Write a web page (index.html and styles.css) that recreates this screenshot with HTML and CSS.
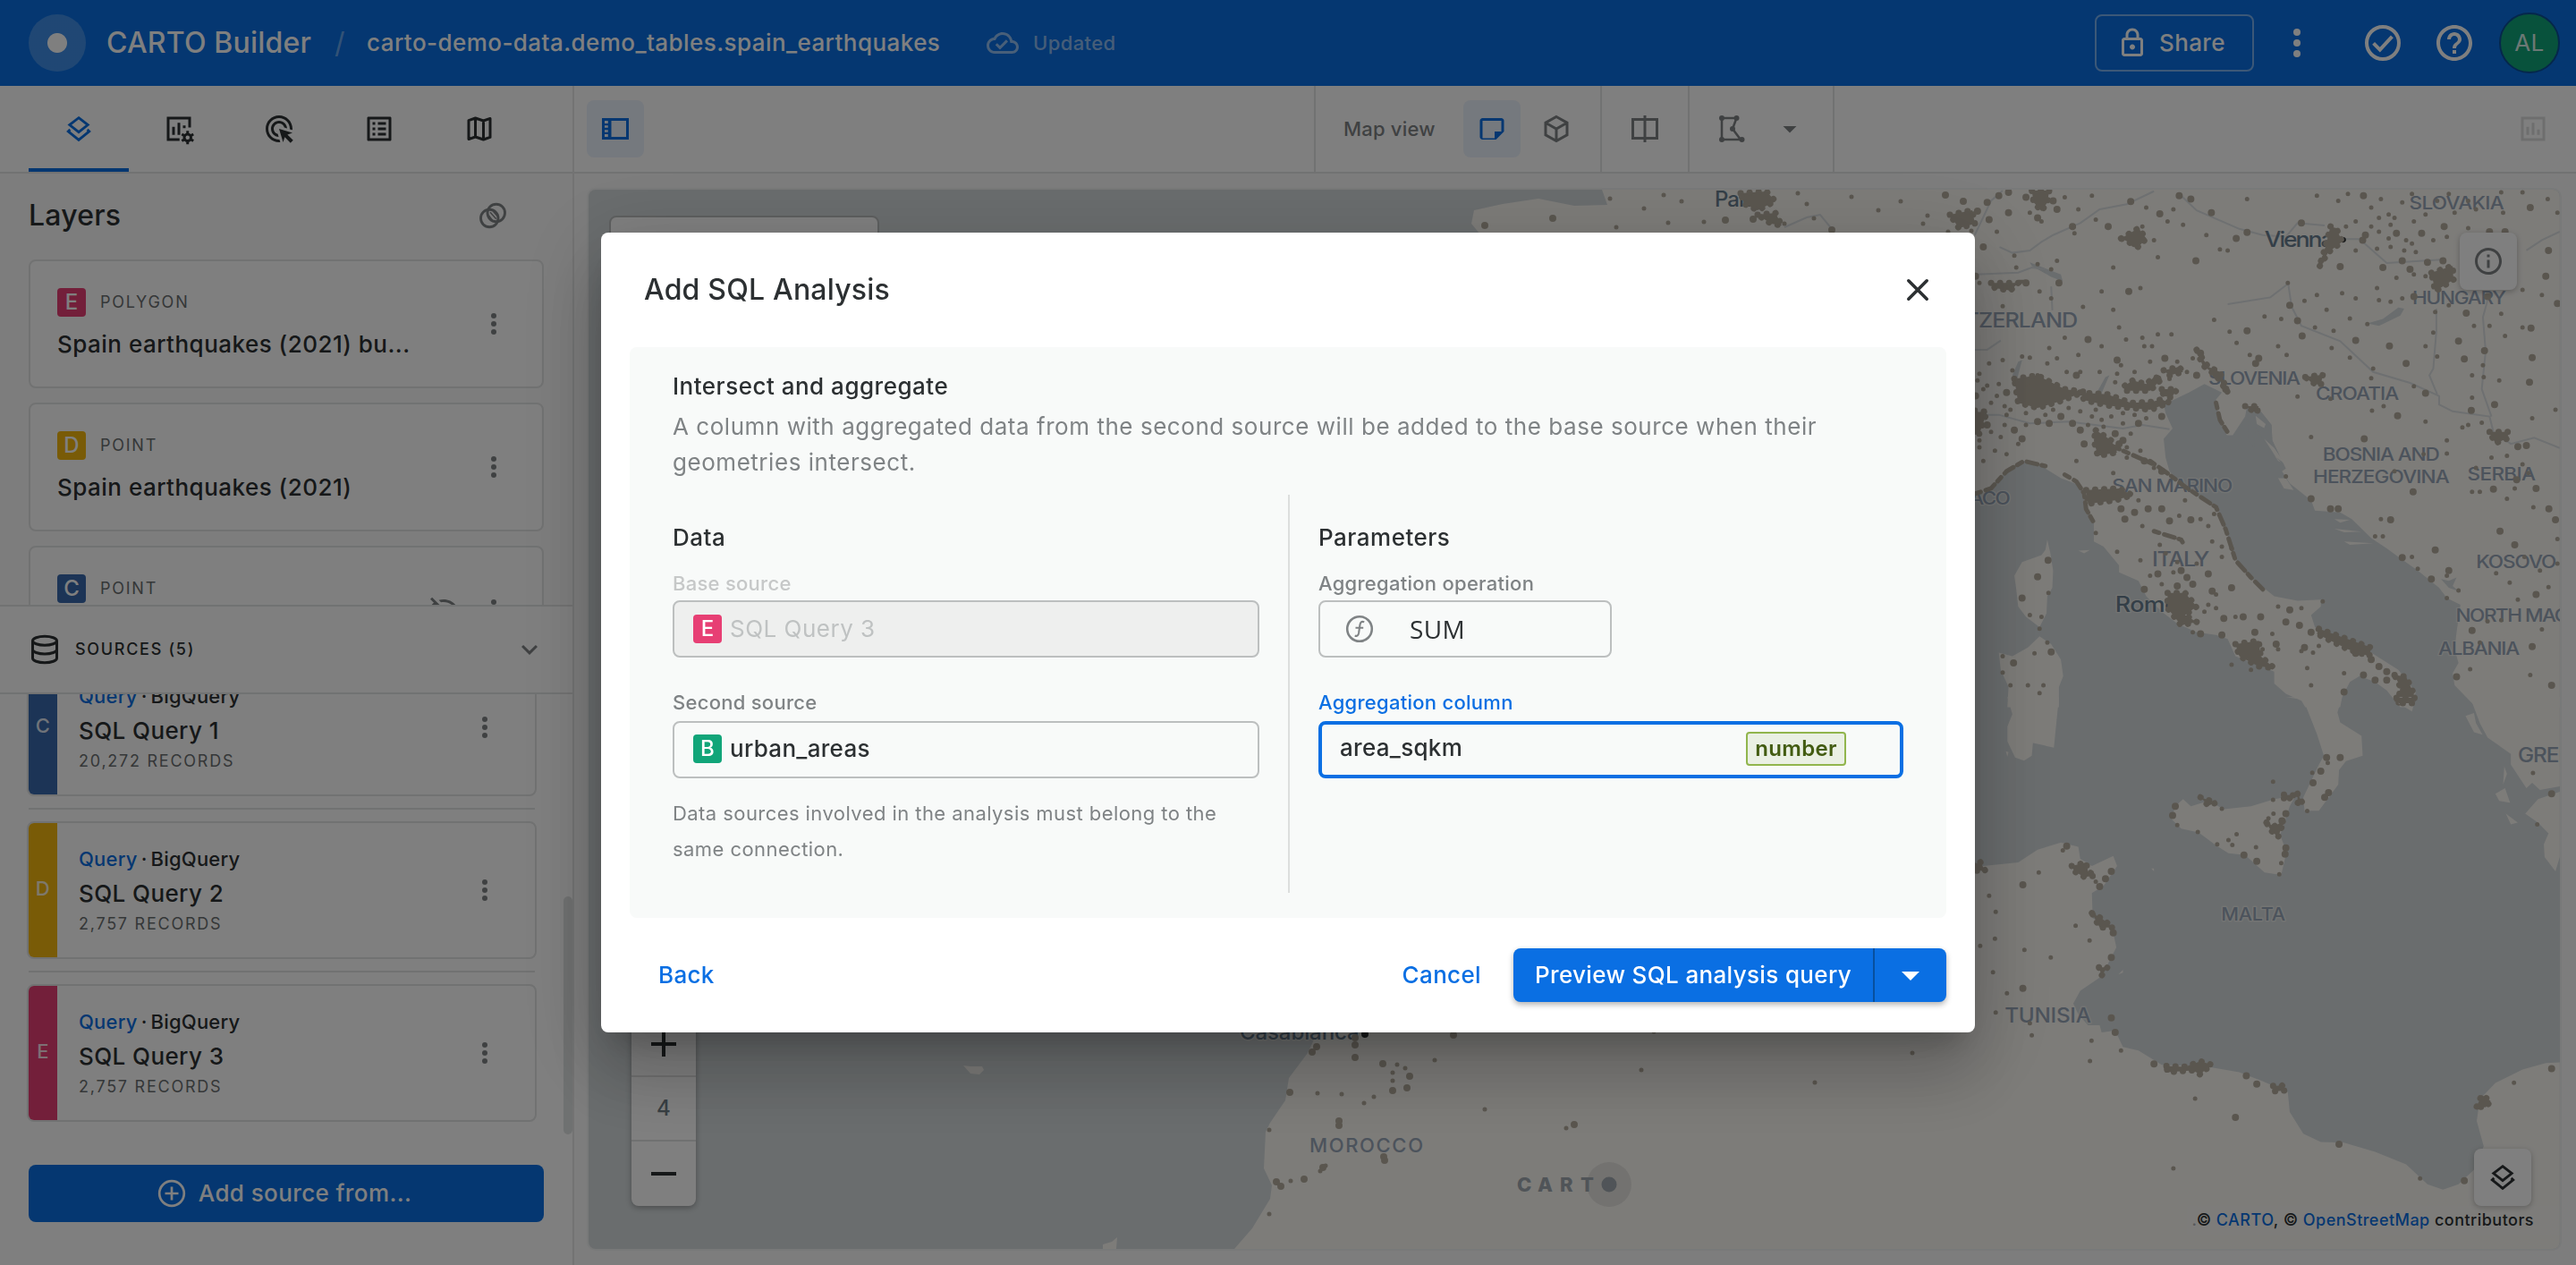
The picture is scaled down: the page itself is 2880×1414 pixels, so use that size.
FILE: index.html
```
<!DOCTYPE html>
<html lang="en">
<head>
<meta charset="utf-8">
<title>CARTO Builder</title>
<link rel="stylesheet" href="styles.css">
</head>
<body>
<svg width="0" height="0" class="defs">
  <symbol id="i-layers" viewBox="0 0 24 24"><path d="M12 3.8 18.8 9 12 14.4 5.2 9ZM5.6 12.6 4.2 13.9 12 20.2l7.8-6.3-1.4-1.3" fill="none" stroke="currentColor" stroke-width="1.9"/></symbol>
  <symbol id="i-more" viewBox="0 0 24 24"><circle cx="12" cy="6" r="2"/><circle cx="12" cy="12" r="2"/><circle cx="12" cy="18" r="2"/></symbol>
  <symbol id="i-caret" viewBox="0 0 24 24"><path d="M7 10l5 5 5-5z"/></symbol>
</svg>
<div class="app">
  <header class="topbar">
    <span class="logo"></span>
    <span class="brand">CARTO Builder</span>
    <span class="slash">/</span>
    <span class="map-name">carto-demo-data.demo_tables.spain_earthquakes</span>
    <span class="saved">
      <svg class="i36" viewBox="0 0 24 24"><path d="M19.35 10.04C18.67 6.59 15.64 4 12 4 9.11 4 6.6 5.64 5.35 8.04 2.34 8.36 0 10.91 0 14c0 3.31 2.69 6 6 6h13c2.76 0 5-2.24 5-5 0-2.64-2.05-4.78-4.65-4.96zM19 18H6c-2.21 0-4-1.79-4-4 0-2.05 1.53-3.76 3.56-3.97l1.07-.11.5-.95C8.08 7.14 9.94 6 12 6c2.62 0 4.88 1.86 5.39 4.43l.3 1.5 1.53.11c1.56.1 2.78 1.41 2.78 2.96 0 1.65-1.35 3-3 3zm-9-3.82l-2.09-2.09L6.5 13.5 10 17l6.01-6.01-1.41-1.41z"/></svg>
      Updated
    </span>
    <div class="top-actions">
      <button class="share"><svg class="i36" viewBox="0 0 24 24"><path d="M18 8h-1V6c0-2.76-2.24-5-5-5S7 3.24 7 6v2H6c-1.1 0-2 .9-2 2v10c0 1.1.9 2 2 2h12c1.1 0 2-.9 2-2V10c0-1.1-.9-2-2-2zM9 6c0-1.66 1.34-3 3-3s3 1.34 3 3v2H9V6zm9 14H6V10h12v10zm-6-3c1.1 0 2-.9 2-2s-.9-2-2-2-2 .9-2 2 .9 2 2 2z"/></svg>Share</button>
      <svg class="i48 top-more"><use href="#i-more"/></svg>
      <svg class="i48 top-check" viewBox="0 0 24 24" fill="none" stroke="currentColor" stroke-width="2"><circle cx="12" cy="12" r="9"/><path d="M6.8 12.2l3.6 3.6 6.8-7.4"/></svg>
      <svg class="i48 top-help" viewBox="0 0 24 24"><path d="M11 18h2v-2h-2v2zm1-16C6.48 2 2 6.48 2 12s4.48 10 10 10 10-4.48 10-10S17.52 2 12 2zm0 18c-4.41 0-8-3.59-8-8s3.59-8 8-8 8 3.59 8 8-3.59 8-8 8zm0-14c-2.21 0-4 1.79-4 4h2c0-1.1.9-2 2-2s2 .9 2 2c0 2-3 1.75-3 5h2c0-2.25 3-2.5 3-5 0-2.21-1.79-4-4-4z"/></svg>
      <span class="avatar">AL</span>
    </div>
  </header>

  <div class="body">
    <aside class="sidebar">
      <nav class="tabs">
        <span class="tab tab-on"><svg class="i36"><use href="#i-layers"/></svg></span>
        <span class="tab"><svg class="i36" viewBox="0 0 24 24" fill="none" stroke="currentColor" stroke-width="2"><path d="M12.5 20H4V4h16v7M8 16.5v-6M12 16.500V7.500M16 11.500v-2"/><circle cx="18.500" cy="18.500" r="2.500"/><path d="M18.500 13.500v2M18.500 21.500v2M14.200 16l1.700 1M21.100 20l1.700 1M14.200 21l1.700-1M21.100 17l1.700-1"/></svg></span>
        <span class="tab"><svg class="i36" viewBox="0 0 24 24"><path d="M11.710,17.990C8.530,17.840,6,15.220,6,12c0-3.310,2.690-6,6-6c3.220,0,5.840,2.530,5.990,5.710l-2.100-0.630C15.480,9.310,13.890,8,12,8c-2.210,0-4,1.790-4,4c0,1.890,1.310,3.480,3.080,3.890L11.710,17.990z M22,12c0,0.300-0.010,0.600-0.040,0.900l-1.970-0.590C20,12.210,20,12.100,20,12c0-4.420-3.580-8-8-8s-8,3.580-8,8s3.580,8,8,8c0.100,0,0.210,0,0.310-0.010l0.590,1.970C12.600,21.990,12.300,22,12,22C6.480,22,2,17.520,2,12C2,6.480,6.480,2,12,2S22,6.480,22,12z M18.230,16.260L22,15l-10-3l3,10l1.260-3.770l4.270,4.270l1.980-1.980L18.230,16.260z"/></svg></span>
        <span class="tab"><svg class="i36" viewBox="0 0 24 24"><path d="M19 5v14H5V5h14m1.100-2H3.900c-.5 0-.9.4-.9.9v16.200c0 .4.4.9.9.9h16.200c.4 0 .9-.5.9-.9V3.900c0-.5-.5-.9-.9-.9zM11 7h6v2h-6V7zm0 4h6v2h-6v-2zm0 4h6v2h-6zM7 7h2v2H7zm0 4h2v2H7zm0 4h2v2H7z"/></svg></span>
        <span class="tab"><svg class="i36" viewBox="0 0 24 24" fill="none" stroke="currentColor" stroke-width="2" stroke-linejoin="round"><path d="M4 5.700 9 4l6 2 5-1.700v14L15 20l-6-2-5 1.700zM9 4v14M15 6v14"/></svg></span>
      </nav>
      <section class="layers">
        <div class="layers-head"><h2>Layers</h2>
          <svg class="i36 grey" viewBox="0 0 24 24" fill="none" stroke="currentColor" stroke-width="1.900"><circle cx="14.500" cy="10" r="6.500"/><circle cx="9.500" cy="14" r="6.500"/><path d="M10 9.500l4.500 5M12 8.500l3.500 4M9 12l3 4" stroke-width="1"/></svg>
        </div>
        <div class="layer"><div class="layer-main"><div class="kind"><b class="tag c-e">E</b>POLYGON</div><div class="layer-name">Spain earthquakes (2021) bu...</div></div><svg class="i36 grey"><use href="#i-more"/></svg></div>
        <div class="layer"><div class="layer-main"><div class="kind"><b class="tag c-d">D</b>POINT</div><div class="layer-name">Spain earthquakes (2021)</div></div><svg class="i36 grey"><use href="#i-more"/></svg></div>
        <div class="layer"><div class="layer-main"><div class="kind"><b class="tag c-c">C</b>POINT</div></div>
          <svg class="i36 grey eye" viewBox="0 0 24 24"><path d="M12 6c3.790 0 7.170 2.130 8.820 5.500-.59 1.220-1.420 2.270-2.410 3.120l1.410 1.410c1.390-1.230 2.490-2.770 3.180-4.530C21.270 7.110 17 4 12 4c-1.270 0-2.490.2-3.640.57l1.650 1.650C10.660 6.090 11.320 6 12 6zM2.010 3.870l2.680 2.680C3.060 7.830 1.770 9.530 1 11.500 2.730 15.890 7 19 12 19c1.520 0 2.980-.29 4.320-.82l3.420 3.420 1.410-1.410L3.420 2.450 2.010 3.870z"/></svg>
          <svg class="i36 grey"><use href="#i-more"/></svg></div>
      </section>
      <div class="sources-head">
        <svg class="i36" viewBox="0 0 24 24" fill="none" stroke="currentColor" stroke-width="2"><ellipse cx="12" cy="5.500" rx="9" ry="3.300"/><path d="M3 5.500v13c0 1.800 4 3.300 9 3.300s9-1.500 9-3.300v-13M3 12c0 1.800 4 3.300 9 3.300s9-1.500 9-3.300"/></svg>
        <span>SOURCES (5)</span>
        <svg class="i36 grey chev" viewBox="0 0 24 24"><path d="M7.410 8.590L12 13.170l4.590-4.580L18 10l-6 6-6-6z"/></svg>
      </div>
      <div class="sources">
        <div class="src"><b class="strip c-c">C</b><div class="src-main"><p class="src-type"><i>Query</i> · <span>BigQuery</span></p><p class="src-name">SQL Query 1</p><p class="src-rec">20,272 RECORDS</p></div><svg class="i36 grey"><use href="#i-more"/></svg></div>
        <hr>
        <div class="src"><b class="strip c-d">D</b><div class="src-main"><p class="src-type"><i>Query</i> · <span>BigQuery</span></p><p class="src-name">SQL Query 2</p><p class="src-rec">2,757 RECORDS</p></div><svg class="i36 grey"><use href="#i-more"/></svg></div>
        <hr>
        <div class="src"><b class="strip c-e">E</b><div class="src-main"><p class="src-type"><i>Query</i> · <span>BigQuery</span></p><p class="src-name">SQL Query 3</p><p class="src-rec">2,757 RECORDS</p></div><svg class="i36 grey"><use href="#i-more"/></svg></div>
        <span class="scrollbar"></span>
      </div>
      <div class="add-wrap"><button class="add"><svg class="i36" viewBox="0 0 24 24" fill="none" stroke="currentColor" stroke-width="1.800"><circle cx="12" cy="12" r="9.200"/><path d="M12 7v10M7 12h10"/></svg>Add source from...</button></div>
    </aside>

    <main class="stage">
      <div class="toolbar">
        <span class="tool tool-on panel-tool"><svg class="i36" viewBox="0 0 24 24"><path d="M2 4v16h20V4H2zm4.500 14H4v-2h2.500v2zm0-3.500H4v-1.700h2.500v1.700zm0-3.300H4V9.500h2.500v1.700zm0-3.200H4V6h2.500v2zM20 18H9V6h11v12z"/></svg></span>
        <div class="group g-view"><span class="view-label">Map view</span>
          <span class="tool tool-on"><svg class="i36" viewBox="0 0 24 24"><path d="M19 6v8h-5v5H5V6h14m0-2H5c-1.100 0-2 .9-2 2v12c0 1.100.9 2 2 2h10l6-6V6c0-1.100-.9-2-2-2z"/></svg></span>
          <span class="tool"><svg class="i36" viewBox="0 0 24 24" fill="none" stroke="currentColor" stroke-width="2"><path d="M12 3l8 4.500v9L12 21l-8-4.500v-9zM4 7.500l8 4.500 8-4.500M12 12v9"/></svg></span>
        </div>
        <div class="group g-split"><svg class="i36" viewBox="0 0 24 24" fill="none" stroke="currentColor" stroke-width="2"><path d="M3 5h18v14H3zM12 2v20" /></svg></div>
        <div class="group g-draw"><svg class="i36" viewBox="0 0 24 24"><circle cx="4" cy="4" r="2"/><circle cx="15" cy="4" r="2"/><circle cx="12" cy="12" r="2"/><circle cx="4" cy="20" r="2"/><circle cx="19" cy="20" r="2"/><path d="M4 4h11l-3 8 6 8H4z" fill="none" stroke="currentColor" stroke-width="1.700"/></svg>
          <svg class="i36"><use href="#i-caret"/></svg></div>
        <svg class="i36 chart-tool" viewBox="0 0 24 24" fill="none" stroke="currentColor" stroke-width="2"><path d="M4 4h16v16H4zM8 16.500v-6M12 16.500v-9M16 16.500v-4"/></svg>
      </div>
      <div class="map">
        <svg class="canvas" viewBox="658 212 2204 1184">
          <g class="land">
            <path d="M1791 212H2208V262H1655L1645 250 1648 235 1680 228 1720 222 1760 230 1797 229Z"/>
            <path d="M1500 1130H2208V1396H1380L1400 1373 1420 1340 1422 1325 1413 1306 1415 1265 1420 1255 1437 1230 1441 1205 1462 1177 1470 1160Z"/>
            <path d="M1077 1191 1085 1192 1098 1192 1100 1196 1095 1201 1085 1200ZM1233 1396V1391L1243 1388 1249 1383 1248 1396Z"/>
          </g>
          <g transform="translate(2200 190) scale(.4337 .3827)">
            <path class="land" d="M-5 57H1526V1569H1310L1255 1505 1250 1470 1265 1440 1255 1400 1260 1350 1270 1270 1235 1250 1215 1220 1160 1170 1110 1130 1080 1105 1040 1075 990 1020 960 1000 895 995 885 965 830 915 810 880 820 872 785 790 783 745 755 705 720 690 715 720 683 775 668 775 645 720 640 670 655 650 610 625 570 650 505 685 510 710 528 755 505 785 510 840 520 880 550 915 590 950 640 980 665 1045 685 1130 730 1190 790 1245 850 1258 910 1255V1275L885 1300 895 1335 960 1370 1040 1410 1110 1460 1155 1525 1145 1569H1115L1080 1520 1050 1495 1010 1478 985 1495 965 1540 960 1569H870L860 1550 820 1530 790 1500V1465L745 1445 690 1420 670 1370 640 1358 590 1350 540 1325 500 1290 460 1245 440 1200 390 1175V1155L350 1100 325 1085V1030L300 990V950L285 920 240 900 190 865 140 848 100 880 50 940-5 950Z"/>
            <path class="land" d="M205 1080 213 1120 220 1170 218 1220 205 1245 203 1295 185 1335 150 1305 130 1275 125 1225 120 1185 140 1145 190 1125 200 1110ZM185 1362 215 1385 240 1430 246 1478 235 1510V1569H102L105 1510 85 1460 80 1410 115 1420 155 1395ZM285 1112 315 1110 300 1120ZM945 1020 985 1022 960 1030ZM945 1048 1015 1056 970 1058ZM970 1085 1045 1090 985 1095ZM800 900 815 930 840 935 820 900ZM735 725 770 745 765 755 740 745ZM760 780 790 820 840 868 800 850Z"/>
            <path class="sea" d="M720 690 755 705 783 745 785 790 815 862 790 835 762 790 742 750 738 810 724 790ZM160 270 240 305 245 325 215 312 165 280ZM1030 448 1070 435 1110 402 1125 405 1115 425 1060 455ZM355 605 365 600 340 665 330 655ZM130 560 140 555 125 620 115 600ZM1220 1195 1240 1200 1260 1190 1250 1215 1265 1230 1240 1220Z"/>
            <path class="land" d="M742 718 768 742 764 754 745 742ZM764 785 790 812 818 858 795 840Z"/>
            <path class="river" d="M82 225 115 242 160 235 190 210 220 190 290 155 340 115 410 100 480 62M550 75 590 118 700 172 760 190 820 195 850 155 920 162M970 202H1010L1080 272 1220 262M670 392 780 372 826 332 835 400 860 455 960 500 1045 590 1140 622 1215 660V685L1250 705 1345 720 1355 765 1400 800 1460 782 1526 812M1208 405V470L1200 580 1190 600 1210 655M1340 380 1328 430 1335 530 1325 640 1350 720M20 305 130 300 165 285 200 290M18 525H50L85 498M30 715H80L160 740 260 735 400 755 450 745 520 757M18 190 60 90 90 60M215 340 218 410M1526 180 1480 205 1440 235"/>
            <g class="country a">
              <text x="1138" y="115" textLength="245">SLOVAKIA</text>
              <text x="1146" y="392" textLength="242">HUNGARY</text>
              <text x="-8" y="461" textLength="292" class="lg">TZERLAND</text>
              <text x="620" y="628" textLength="238">SLOVENIA</text>
              <text x="897" y="671" textLength="215">CROATIA</text>
              <text x="915" y="849" textLength="302">BOSNIA AND</text>
              <text x="890" y="915" textLength="352">HERZEGOVINA</text>
              <text x="1288" y="907" textLength="176">SERBIA</text>
              <text x="372" y="942" textLength="311">SAN MARINO</text>
              <text x="-30" y="977" textLength="140">NACO</text>
              <text x="475" y="1157" textLength="148" class="lg">ITALY</text>
              <text x="1310" y="1163" textLength="208">KOSOVO</text>
              <text x="1258" y="1319" textLength="470">NORTH MACEDONIA</text>
              <text x="1213" y="1416" textLength="210">ALBANIA</text>
            </g>
            <g class="town-name a"><text x="765" y="225" textLength="180">Vienna</text><text x="380" y="1290" textLength="164">Rome</text></g>
            <circle cx="967" cy="204" r="8"/>
            <path class="city" d="M120 610 180 600 250 640 300 648 240 675 180 695 130 680ZM165 60 210 60 205 95 190 120 170 95ZM395 200 440 170 460 200 440 225ZM1195 300 1250 280 1252 320 1205 355ZM330 760 370 790 385 825 335 835 325 790ZM515 1235 560 1235 590 1275 560 1300 590 1320 550 1330 515 1280ZM690 1385 750 1375 755 1420 790 1455 750 1450 700 1420ZM1100 1475 1130 1480 1150 1530 1145 1560 1110 1555 1115 1510ZM305 935 390 930 425 950 380 965 310 975ZM-5 710 50 705 30 770-5 780ZM1345 765 1395 765 1390 785 1360 798ZM870 605 915 598 910 630 885 620ZM935 165 950 170 965 210 930 240 905 285 922 225ZM60 330 130 330 110 352 70 345ZM905 1340 1040 1395 1035 1420 980 1400 900 1355ZM715 690 750 690 745 710ZM590 525 620 575 650 590 670 650 640 600 605 570Z"/>
            <path class="city" d="M290 650 360 655 420 680 470 678 500 670 520 680 470 700 420 695 360 688 300 672ZM405 630 425 615 460 625 480 605 500 610 470 645 410 645ZM505 585 545 575 555 590 520 600ZM500 640 540 640 525 665 505 660Z"/>
            <path class="city-line" d="M20 945 60 930 100 880 145 850 200 865M250 890 280 910 300 945 305 990 325 1030M470 850 520 890 560 925 600 955 640 985 665 1050 690 1140 730 1190 765 1230M340 790 420 830 480 860M640 680 650 730 672 770M480 1055 550 1080 560 1100"/>
            <path class="town" d="M270 165h0M362 165h0M420 92h0M495 128h0M545 75h0M575 85h0M628 125h0M720 182h0M692 200h0M588 265h0M415 355h0M430 215h0M25 120h0M50 95h0M80 75h0M105 65h0M150 80h0M230 115h0M40 225h0M235 330h0M150 330h0M20 310h0M860 155h0M1020 75h0M1018 205h0M1025 190h0M960 282h0M1070 285h0M1120 265h0M1140 290h0M1185 270h0M1225 265h0M1105 185h0M1170 185h0M1450 110h0M1345 180h0M1385 180h0M1497 235h0M1490 310h0M1228 165h0M1520 390h0M830 395h0M850 440h0M862 485h0M1000 498h0M1087 514h0M1130 565h0M1150 370h0M1340 370h0M1285 418h0M1265 500h0M1332 528h0M1280 552h0M1452 462h0M1455 548h0M1448 620h0M1358 685h0M1298 702h0M1108 718h0M1180 652h0M720 470h0M742 565h0M750 550h0M385 555h0M600 535h0M640 598h0M665 640h0M508 550h0M310 495h0M1440 805h0M1418 808h0M1415 905h0M1465 930h0M1355 932h0M1515 1022h0M1372 1055h0M1410 1095h0M1240 1170h0M1465 1240h0M1300 1345h0M1205 1110h0M1090 1022h0M1148 940h0M1120 1132h0M1195 1195h0M885 960h0M935 990h0M955 990h0M1498 990h0M1505 1505h0M1455 1392h0M1260 1480h0M1022 785h0M500 990h0M575 1022h0M520 1025h0M620 1180h0M630 1230h0M680 1220h0M660 1310h0M710 1305h0M755 1305h0M830 1285h0M820 1320h0M855 1330h0M885 1350h0M868 1395h0M600 1355h0M655 1358h0M795 1385h0M740 1350h0M1040 1430h0M1060 1450h0M1080 1465h0M1020 1475h0M1050 1490h0M1080 1490h0M970 1525h0M1000 1412h0M455 1225h0M550 1170h0M565 1190h0M580 1210h0M540 1215h0M490 1180h0M207 1140h0M140 1250h0M180 1188h0M118 1440h0M215 1408h0M405 1020h0M430 1000h0M465 990h0M395 990h0M455 850h0M500 880h0M400 790h0M380 770h0M290 760h0M270 740h0M240 720h0M210 740h0M180 735h0M120 760h0M50 745h0M100 650h0M20 660h0M150 620h0M280 600h0M490 610h0M590 600h0M500 720h0M440 740h0M390 800h0M300 800h0M140 785h0M105 125h0M180 140h0M55 145h0M220 90h0"/>
            <path class="village" d="M320 75h0M285 115h0M330 145h0M450 165h0M460 110h0M480 205h0M515 150h0M530 115h0M555 160h0M670 235h0M650 232h0M615 190h0M490 255h0M375 285h0M345 355h0M445 345h0M275 185h0M230 265h0M215 290h0M180 275h0M125 285h0M120 250h0M90 398h0M375 408h0M297 400h0M215 375h0M185 355h0M30 330h0M720 85h0M900 75h0M955 90h0M980 70h0M1065 85h0M1040 110h0M1120 95h0M1145 70h0M1085 130h0M1060 140h0M1100 140h0M1090 160h0M1150 150h0M1180 130h0M1210 90h0M1240 70h0M1290 90h0M1255 125h0M1375 65h0M1430 65h0M1495 85h0M1520 125h0M1310 115h0M1380 125h0M1290 170h0M1000 150h0M975 165h0M1040 165h0M1060 180h0M1085 200h0M1055 230h0M1000 235h0M1090 225h0M1125 235h0M1130 205h0M1145 215h0M1200 205h0M1235 195h0M1155 240h0M1180 310h0M1150 305h0M1105 315h0M1055 345h0M965 360h0M1000 375h0M1120 375h0M1060 380h0M1090 385h0M900 365h0M868 382h0M825 330h0M925 408h0M985 434h0M765 428h0M808 435h0M635 438h0M675 472h0M895 460h0M943 470h0M938 520h0M985 548h0M800 515h0M822 540h0M727 540h0M693 505h0M525 480h0M490 480h0M450 490h0M455 515h0M390 460h0M408 495h0M250 490h0M210 520h0M285 540h0M230 550h0M345 515h0M475 515h0M395 570h0M160 548h0M90 555h0M140 545h0M55 565h0M30 595h0M1030 450h0M1045 580h0M1040 608h0M1150 632h0M1042 703h0M1072 690h0M1180 735h0M850 662h0M935 668h0M885 780h0M1235 790h0M1290 745h0M1325 738h0M1275 752h0M1455 725h0M1515 700h0M1300 600h0M1210 545h0M1180 515h0M1200 475h0M1205 415h0M1240 395h0M1305 455h0M1345 455h0M1375 420h0M1385 485h0M1430 460h0M1480 365h0M1430 350h0M1330 605h0M1370 615h0M1328 570h0M1300 665h0M1350 840h0M1390 835h0M1310 870h0M1300 940h0M1235 828h0M1100 880h0M1175 830h0M1430 860h0M1445 885h0M1320 940h0M1390 960h0M1458 985h0M1410 930h0M1520 1078h0M1435 1130h0M1520 1150h0M1475 1170h0M1362 1178h0M1397 1205h0M1418 1255h0M1497 1218h0M1340 1318h0M1320 1380h0M1375 1315h0M1480 1342h0M1450 1475h0M1295 1458h0M1265 1228h0M1235 1250h0M1235 1185h0M1160 1165h0M1145 1130h0M1065 1020h0M1050 1070h0M1070 1070h0M820 895h0M450 1040h0M545 1010h0M560 965h0M600 1020h0M620 1040h0M635 1005h0M630 1085h0M655 1100h0M680 1105h0M655 1130h0M495 1095h0M510 1120h0M445 1140h0M540 1145h0M590 1150h0M385 1115h0M470 1185h0M500 1210h0M530 1175h0M640 1240h0M620 1270h0M640 1280h0M610 1290h0M690 1305h0M580 1350h0M760 1400h0M800 1400h0M860 1280h0M860 1405h0M905 1390h0M890 1410h0M875 1455h0M885 1505h0M970 1470h0M680 1445h0M730 1460h0M785 1355h0M915 1260h0M800 1275h0M208 1235h0M160 1300h0M190 1305h0M185 1340h0M205 1380h0M172 1412h0M90 1468h0M90 1420h0M110 1505h0M155 1505h0M195 1505h0M185 1528h0M330 1060h0M375 885h0M280 850h0M255 590h0M290 590h0M340 590h0M385 595h0M380 620h0M430 590h0M470 560h0M565 590h0M580 550h0M205 565h0M180 600h0M115 585h0M80 625h0M75 660h0M25 615h0M95 690h0M100 715h0M60 680h0M50 630h0M40 640h0M85 780h0M60 765h0M30 810h0M30 790h0M70 820h0M130 800h0M150 745h0M95 745h0M320 720h0M350 750h0M400 740h0M420 770h0M400 710h0M460 725h0M480 700h0M410 840h0M440 965h0M480 870h0M40 850h0M100 830h0M250 80h0M160 125h0M75 180h0M190 150h0M330 700h0M290 705h0M260 695h0M370 720h0M430 715h0M520 610h0M540 560h0M200 715h0M150 710h0M220 700h0M110 700h0M20 700h0M345 730h0M310 745h0M410 810h0M445 820h0"/>
          </g>
          <g transform="translate(2200 780) scale(.4337 .4043)">
            <path class="land" d="M102-2H235L222 138 190 130 168 125 165 160 145 174 122 165 102 120V80L115 45ZM820-2H965L953 40 960 68 1015 105 1018 160 975 175 957 200 955 240 905 312H868L865 275 885 230 905 185 918 160 900 100 865 5ZM1108-2H1155L1145 38 1110 15ZM555 280 575 300 620 285 660 308 730 300 790 280 845 270 830 300 805 380 822 425 808 490 765 483 715 435 672 430 640 408 595 372 550 362 525 335 535 300ZM1295-2H1526V245L1475 255 1455 235 1440 250 1400 185V155L1340 110 1320 70ZM1526 260 1470 280 1437 320 1470 345 1497 375 1485 405 1487 440 1515 480 1526 440ZM1283 50 1305 42 1310 70 1327 102 1305 95ZM1383 190 1390 210 1380 240ZM1360 265 1385 250 1398 290 1370 285ZM1387 320 1418 345 1400 350ZM98 148 105 150 102 163ZM473 472 480 472 480 480ZM388 765 400 752 400 760Z"/>
            <path class="land" d="M-5 475 40 465 130 455 180 420 240 400 285 412 290 445 320 465 375 437 385 465 350 520 320 540 322 610 372 635 383 690 345 770 290 810 272 845 285 875 310 905H340L345 925 380 920 400 965 440 975 500 1015 620 1020 700 1035 760 1060 825 1090 830 1145 865 1205 910 1228 970 1230 1050 1255 1130 1290 1185 1345 1225 1360 1265 1345 1305 1305 1330 1240 1312 1170 1320 1110 1360 1065 1430 1028 1490 1010 1526 1008V1524H-5Z"/>
            <g class="country b">
              <text x="1418" y="178" textLength="208" class="lg">GREECE</text>
              <text x="653" y="617" textLength="166">MALTA</text>
              <text x="95" y="899" textLength="223" class="lg">TUNISIA</text>
            </g>
            <path class="city" d="M268 465 305 455 310 480 330 492 300 495 275 480ZM512 1018 560 1020 600 1005 630 1015 610 1030 600 1042 580 1030 515 1035ZM787 1073 810 1072 822 1085 790 1088ZM1312 1130 1325 1098 1348 1115 1335 1132ZM320 595 345 610 375 635 340 635ZM770 345 790 355 815 340 800 385 780 365ZM600 275 640 290 620 298ZM815 268 845 270 815 285ZM338 745 360 745 345 768ZM1105 0 1155 0 1150 15 1110 15ZM18 465 30 450 45 478H18ZM850 265 865 295 850 290Z"/>
            <path class="town" d="M255 410h0M340 522h0M370 480h0M375 650h0M370 718h0M380 925h0M370 885h0M480 1012h0M745 1068h0M718 1045h0M957 1234h0M1280 1335h0M535 300h0M528 325h0M820 415h0M818 432h0M745 452h0M712 435h0M890 235h0M925 165h0M910 203h0M920 275h0M930 262h0M142 517h0M142 803h0M690 1160h0M1505 1025h0M1505 265h0M820 320h0M810 340h0M960 165h0M355 500h0"/>
            <path class="village" d="M183 483h0M55 547h0M72 592h0M70 666h0M32 686h0M146 697h0M214 718h0M278 630h0M314 671h0M65 759h0M101 817h0M72 870h0M160 900h0M165 933h0M319 948h0M315 1004h0M395 975h0M586 1108h0M530 1301h0M1166 1329h0M1408 1064h0M540 352h0M593 371h0M643 405h0M672 393h0M693 377h0M682 407h0M743 413h0M788 320h0M775 333h0M787 232h0M787 282h0M803 488h0M808 457h0M875 313h0M928 180h0M888 207h0M245 422h0M1457 208h0M1468 350h0M330 508h0M655 307h0"/>
          </g>
          <path class="river" d="M1995 254 2020 243 2035 240 2048 256"/>
          <g class="country c"><text x="1464" y="1288" textLength="127" class="lg">MOROCCO</text></g>
          <g class="town-name c"><text x="1386" y="1162" textLength="134">Casablanca</text><text x="1917" y="231" textLength="54">Paris</text></g>
          <path class="town" d="M1472 1170h0M1467 1176h0M1515 1160h0M1515 1182h0M1546 1189h0M1576 1203h0M1573 1216h0M1557 1219h0M1442 1221h0M1497 1253h0M1497 1258h0M1547 1293h0M1548 1297h0M1427 1321h0M1432 1326h0M1458 1318h0M1479 1305h0M1625 1157h0M1760 1257h0M1515 1168h0"/>
          <path class="village" d="M1443 1320h0M1482 1303h0M1476 1309h0M1562 1190h0M1571 1194h0M1557 1199h0M1557 1208h0M1604 1185h0M1473 1222h0M1500 1223h0M1536 1226h0M1525 1233h0M1660 1240h0M1751 1261h0M1835 1196h0M2029 1210h0M2138 1177h0M1419 1263h0M1419 1357h0M1807 254h0M1865 249h0M1849 1153h0M2204 258h0M1905 248h0M2155 241h0M2178 259h0M1800 222h0M1838 233h0M1880 225h0M1995 250h0M2020 228h0M2028 244h0M2070 220h0M2100 235h0M2125 225h0M2150 250h0M1860 218h0M2010 216h0"/>
          <path class="city" d="M1946 216 1975 214 1985 225 1965 235 1950 228ZM2180 240 2205 235 2208 250 2190 255ZM1965 240 1985 238 1992 252 1980 250Z"/>
          <path class="town" d="M1660 252h0M1736 244h0M1929 246h0M2048 257h0M2195 225h0M2175 218h0M1960 245h0"/>
          <circle cx="1526" cy="1156" r="4"/>
          <g class="wordmark"><circle cx="1799" cy="1324" r="25" class="halo"/><circle cx="1799" cy="1324" r="8.500"/><text x="1696 1719 1744 1767" y="1332">CART</text></g>
        </svg>
        <div class="widget"></div>
        <button class="info"><svg class="i36" viewBox="0 0 24 24"><path d="M11 7h2v2h-2zm0 4h2v6h-2zm1-9C6.480 2 2 6.480 2 12s4.480 10 10 10 10-4.480 10-10S17.520 2 12 2zm0 18c-4.410 0-8-3.590-8-8s3.590-8 8-8 8 3.590 8 8-3.590 8-8 8z"/></svg></button>
        <button class="basemap"><svg class="i36"><use href="#i-layers"/></svg></button>
        <div class="zoom"><span class="plus"></span><span class="level">4</span><span class="minus"></span></div>
        <div class="credit"><small>.</small>© <a>CARTO</a>, © <a>OpenStreetMap</a> contributors</div>
      </div>
    </main>
  </div>
</div>

<div class="backdrop">
  <div class="dialog">
    <div class="dialog-head"><h1>Add SQL Analysis</h1><svg class="i48" viewBox="0 0 24 24" stroke="currentColor" stroke-width="1.800" stroke-linecap="round"><path d="M6.900 6.900 17.100 17.100M17.100 6.900 6.900 17.100"/></svg></div>
    <div class="panel">
      <h3>Intersect and aggregate</h3>
      <p class="desc">A column with aggregated data from the second source will be added to the base source when their geometries intersect.</p>
      <div class="cols">
        <div class="col col-data">
          <h3>Data</h3>
          <label class="off">Base source</label>
          <div class="field field-off"><b class="tag c-e">E</b><span>SQL Query 3</span></div>
          <label>Second source</label>
          <div class="field field-second"><b class="tag c-b">B</b><span>urban_areas</span></div>
          <p class="help">Data sources involved in the analysis must belong to the same connection.</p>
        </div>
        <div class="col col-params">
          <h3>Parameters</h3>
          <label>Aggregation operation</label>
          <div class="field field-op"><svg class="i36" viewBox="0 0 24 24" fill="none" stroke="currentColor" stroke-width="1.700"><circle cx="12" cy="12" r="9.200"/><path d="M15.500 6.900c-2-.9-2.900.2-3.200 2l-.9 6.200c-.3 1.700-1.300 2.700-2.900 1.900M9 11.200h5.800" stroke-width="1.400"/></svg><span class="op">SUM</span></div>
          <label class="on">Aggregation column</label>
          <div class="field field-on"><span class="colname">area_sqkm</span><span class="type">number</span></div>
        </div>
      </div>
    </div>
    <div class="dialog-foot"><a class="back">Back</a><a class="cancel">Cancel</a>
      <div class="split"><button class="run">Preview SQL analysis query</button><button class="drop"><svg class="i48"><use href="#i-caret"/></svg></button></div>
    </div>
  </div>
</div>
</body>
</html>
```
FILE: styles.css
```
* { box-sizing: border-box; margin: 0; padding: 0; }
body { width: 2880px; height: 1414px; overflow: hidden; font: 500 26px/40px Inter, "Liberation Sans", sans-serif; letter-spacing: .4px; color: #2c3032; background: #fff; }
svg { display: block; flex: none; fill: currentColor; }
.defs { position: absolute; }
svg[fill="none"] { fill: none; }
button { font: inherit; letter-spacing: inherit; border: 0; color: inherit; display: flex; align-items: center; justify-content: center; }
.i36 { width: 36px; height: 36px; }
.i48 { width: 48px; height: 48px; }
.grey { color: #7f8385; }
.c-b { background: #11a579; }
.c-c { background: #3969ac; }
.c-d { background: #f2b60f; }
.c-e { background: #e73f74; }

.app { height: 1414px; display: flex; flex-direction: column; }
.topbar { height: 96px; flex: none; background: #0a6fe3; color: #fff; display: flex; align-items: center; padding: 0 18px 0 32px; }
.logo { width: 64px; height: 64px; border-radius: 50%; background: radial-gradient(circle, #fff 10.500px, rgba(255,255,255,.22) 11.500px); }
.brand { font-size: 32px; letter-spacing: .2px; margin-left: 23px; width: 255px; }
.slash { font-size: 32px; width: 36px; font-weight: 400; color: rgba(255,255,255,.4); }
.map-name { width: 693px; letter-spacing: .44px; }
.saved { display: flex; align-items: center; gap: 16px; font-size: 22px; letter-spacing: .4px; color: rgba(255,255,255,.55); }
.top-actions { display: flex; align-items: center; margin-left: auto; }
.share { width: 178px; height: 64px; border: 2px solid rgba(255,255,255,.45); border-radius: 8px; background: none; gap: 12px; padding-right: 8px; }
.top-more { margin-left: 24px; }
.top-check { margin-left: 48px; }
.top-help { margin-left: 32px; }
.avatar { width: 68px; height: 68px; border-radius: 50%; border: 2px solid #0a4f96; background: #11a579; color: rgba(255,255,255,.85); text-align: center; line-height: 64px; font-size: 26px; margin-left: 26px; font-weight: 400; }

.body { flex: 1; display: flex; min-height: 0; }
.sidebar { width: 642px; border-right: 2px solid #e6e7e7; display: flex; flex-direction: column; background: #fff; }
.tabs { height: 98px; flex: none; border-bottom: 2px solid #e3e4e4; display: flex; padding-left: 32px; }
.tab { width: 112px; height: 96px; display: flex; align-items: center; justify-content: center; }
.tab-on { color: #0a6fe3; border-bottom: 4px solid #0a6fe3; padding-top: 4px; }
.layers { height: 482px; flex: none; overflow: hidden; padding: 0 32px; background: #fafafa; display: flex; flex-direction: column; gap: 16px; }
.layers-head { height: 80px; flex: none; padding: 13px 39px 0 0; display: flex; justify-content: space-between; align-items: center; }
.layers-head h2 { font-size: 32px; font-weight: 500; letter-spacing: .2px; }
.layer { height: 144px; flex: none; background: #fff; border: 2px solid #e3e4e4; border-radius: 8px; display: flex; align-items: center; padding: 0 36px 0 30px; }
.layer-main { flex: 1; height: 100%; padding-top: 30px; }
.kind { display: flex; align-items: center; gap: 16px; height: 32px; font-size: 18px; letter-spacing: 1.750px; font-weight: 400; color: #6b6f71; }
.tag { width: 32px; height: 32px; border-radius: 4px; color: #fff; font: 500 24px/32px Inter, sans-serif; letter-spacing: 0; text-align: center; flex: none; }
.layer-name { margin-top: 11px; letter-spacing: .48px; white-space: nowrap; }
.eye { margin-right: 20px; }
.sources-head { height: 100px; flex: none; border-top: 2px solid #e3e4e4; border-bottom: 2px solid #e3e4e4; display: flex; align-items: center; padding: 0 30px 0 32px; font-size: 18px; letter-spacing: 1.700px; background: #fff; }
.sources-head span { margin-left: 16px; }
.chev { margin-left: auto; }
.sources { flex: 1; position: relative; overflow: hidden; padding: 0 40px 14px 30px; display: flex; flex-direction: column; justify-content: flex-end; }
.src { height: 154px; flex: none; border: 2px solid #e3e4e4; border-radius: 8px; display: flex; align-items: center; padding-right: 38px; overflow: hidden; background: #fff; }
.sources hr { border: 0; height: 2px; flex: none; background: #e3e4e4; margin: 13px 2px; }
.strip { width: 32px; height: 100%; color: rgba(255,255,255,.85); font: 500 22px/146px Inter, sans-serif; text-align: center; }
.src-main { flex: 1; padding-left: 24px; align-self: flex-start; padding-top: 24px; }
.src-type { font-size: 22px; line-height: 32px; letter-spacing: .2px; word-spacing: -2px; }
.src-type i { font-style: normal; color: #0a6fe3; }
.src-name { line-height: 46px; }
.src-rec { font-size: 18px; line-height: 22px; letter-spacing: 1.750px; font-weight: 400; color: #6b6f71; }
.scrollbar { position: absolute; right: 0; bottom: 0; width: 10px; height: 266px; border-radius: 5px; background: #dfe2e2; }
.add-wrap { height: 146px; flex: none; padding: 34px 32px 0; }
.add { width: 576px; height: 64px; border-radius: 8px; background: #0a6fe3; color: #fff; gap: 12px; padding-right: 6px; }

.stage { flex: 1; display: flex; flex-direction: column; background: #fafafa; }
.toolbar { height: 98px; flex: none; border-bottom: 2px solid #e3e4e4; background: #fff; display: flex; align-items: center; padding-left: 14px; color: #7f8385; }
.tool { width: 64px; height: 64px; border-radius: 8px; display: flex; align-items: center; justify-content: center; }
.tool-on { background: #ebf2fc; color: #0a6fe3; }
.group { height: 96px; border-left: 2px solid #e3e4e4; display: flex; align-items: center; justify-content: center; }
.g-view { margin-left: 749px; width: 320px; justify-content: flex-start; padding-left: 31px; gap: 8px; }
.view-label { font-size: 22px; letter-spacing: .2px; width: 126px; }
.g-split { width: 98px; }
.g-draw { width: 164px; border-right: 2px solid #e3e4e4; gap: 28px; }
.chart-tool { margin-left: auto; margin-right: 30px; color: #dcdddd; }
.map { width: 2204px; height: 1184px; margin: 18px 0 0 16px; border-radius: 8px; overflow: hidden; position: relative; background: #d4dadc; box-shadow: 0 0 0 2px #f1f2f2; }
.canvas { width: 2204px; height: 1184px; }
.land { fill: #faf8f3; }
.sea { fill: #d4dadc; }
.river { fill: none; stroke: #dce0e2; stroke-width: 2px; vector-effect: non-scaling-stroke; }
.city { fill: #b5ad9f; stroke: #b5ad9f; stroke-width: 7px; stroke-dasharray: .1 10; stroke-linecap: round; vector-effect: non-scaling-stroke; }
.city-line { fill: none; stroke: #b5ad9f; stroke-width: 5px; stroke-linecap: round; stroke-dasharray: 6 6 12 5; vector-effect: non-scaling-stroke; }
.town, .village { fill: none; stroke: #b5ad9f; stroke-linecap: round; vector-effect: non-scaling-stroke; }
.town { stroke-width: 8px; }
.village { stroke-width: 5px; }
.country text, .town-name text { paint-order: stroke; stroke: rgba(250,248,243,.5); stroke-width: 7px; stroke-linejoin: round; }
.country.c text, .town-name.c text { stroke-width: 3px; }
.country { font-family: Inter, sans-serif; font-weight: 500; letter-spacing: 0; fill: #98a6b8; }
.country.a { font-size: 52px; }
.country.b { font-size: 50px; }
.country.c { font-size: 22px; }
.country.a .lg { font-size: 58px; }
.country.b .lg { font-size: 56px; }
.town-name { font-family: Inter, sans-serif; font-weight: 500; fill: #697e90; }
.town-name.a { font-size: 62px; }
.town-name.c { font-size: 24px; }
.wordmark { font: 800 22px Inter, sans-serif; fill: #a0a9b0; }
.halo { fill: rgba(0,0,0,.08); }
.widget { position: absolute; left: 23px; top: 29px; width: 302px; height: 200px; border: 2px solid #bcbfbf; border-radius: 8px; background: #fff; }
.info, .basemap { position: absolute; width: 64px; height: 64px; border-radius: 8px; background: #fff; box-shadow: 0 2px 6px rgba(0,0,0,.25); }
.info { right: 48px; top: 48px; color: #7f8385; }
.basemap { right: 32px; bottom: 48px; }
.zoom { position: absolute; left: 48px; bottom: 48px; width: 72px; height: 216px; border-radius: 8px; background: #fff; box-shadow: 0 2px 6px rgba(0,0,0,.3); display: flex; flex-direction: column; }
.zoom span { height: 72px; display: flex; align-items: center; justify-content: center; font-size: 24px; color: #6f7d87; border-bottom: 2px solid #e1e2e2; }
.zoom .plus { background: linear-gradient(#2c3032, #2c3032) center/28px 4px no-repeat, linear-gradient(#2c3032, #2c3032) center/4px 28px no-repeat; }
.zoom .minus { border: 0; background: linear-gradient(#2c3032, #2c3032) center/28px 4px no-repeat; }
.credit { position: absolute; right: 0; bottom: 16px; height: 32px; line-height: 32px; padding: 0 29px 0 5px; font-size: 18px; letter-spacing: .47px; white-space: nowrap; background: rgba(255,255,255,.15); }
.credit a { color: #0a6fe3; }
.credit small { font-size: 18px; color: #b0b3b4; }

.backdrop { position: fixed; inset: 0; background: rgba(0,0,0,.5); display: flex; align-items: center; justify-content: center; }
.dialog { width: 1536px; height: 894px; border-radius: 8px; background: #fff; box-shadow: 0 22px 30px -14px rgba(0,0,0,.2), 0 48px 76px 6px rgba(0,0,0,.14), 0 18px 92px 16px rgba(0,0,0,.12); padding: 0 32px; }
.dialog-head { height: 128px; padding: 0 8px 0 16px; display: flex; align-items: center; justify-content: space-between; }
.dialog-head h1 { font-size: 32px; font-weight: 500; letter-spacing: .2px; }
h3 { font-size: 26px; font-weight: 500; letter-spacing: .5px; line-height: 40px; }
.panel { height: 638px; border-radius: 8px; background: #f8faf9; padding: 24px 48px 0; }
.desc { font-weight: 400; letter-spacing: .54px; color: #7f8385; margin-top: 5px; width: 1320px; }
.cols { display: flex; margin-top: 16px; height: 445px; }
.col { padding-top: 28px; }
.col-data { width: 690px; border-right: 2px solid #dcdedd; padding-right: 32px; }
.col-params { padding-left: 32px; flex: 1; }
.col label { display: block; font-size: 22px; line-height: 32px; letter-spacing: .27px; color: #7f8385; margin: 15px 0 3px; }
.col label.off { color: #c6c8c8; }
.col label.on { color: #0a6fe3; }
.field { height: 64px; border: 2px solid #bcbfbf; border-radius: 8px; display: flex; align-items: center; padding: 0 22px 0 21px; gap: 9px; letter-spacing: .3px; }
.col .field + label { margin-top: 34px; margin-bottom: 5px; }
.field-second { padding-bottom: 2px; }
.field-off { background: #eeefee; color: #bfc2c2; font-weight: 400; letter-spacing: .5px; }
.field-op { width: 328px; padding-left: 26px; gap: 38px; }
.field-op svg { color: #7f8385; }
.op { font: 400 28px "Open Sans", sans-serif; letter-spacing: .4px; }
.col-params .field-on { width: 654px; border: 4px solid #0a6fe3; padding: 0 60px 2px 20px; justify-content: space-between; }
.colname { margin-top: -2px; }
.type { height: 38px; width: 112px; border: 2px solid #91b54d; border-radius: 4px; background: #eaf0e4; color: #435c12; font-size: 24px; font-weight: 600; line-height: 34px; text-align: center; }
.help { font-size: 22px; font-weight: 400; letter-spacing: .43px; color: #7f8385; margin-top: 19px; }
.dialog-foot { height: 128px; display: flex; align-items: center; color: #0a6fe3; padding-left: 32px; }
.back { margin-right: auto; letter-spacing: .3px; }
.cancel { margin-right: 36px; letter-spacing: .35px; }
.split { display: flex; height: 60px; border-radius: 8px; background: #0a6fe3; color: #fff; box-shadow: 0 3px 6px rgba(0,0,0,.3); }
.run { width: 404px; background: none; border-right: 2px solid #07509f; letter-spacing: .35px; }
.drop { width: 80px; background: none; }
```
